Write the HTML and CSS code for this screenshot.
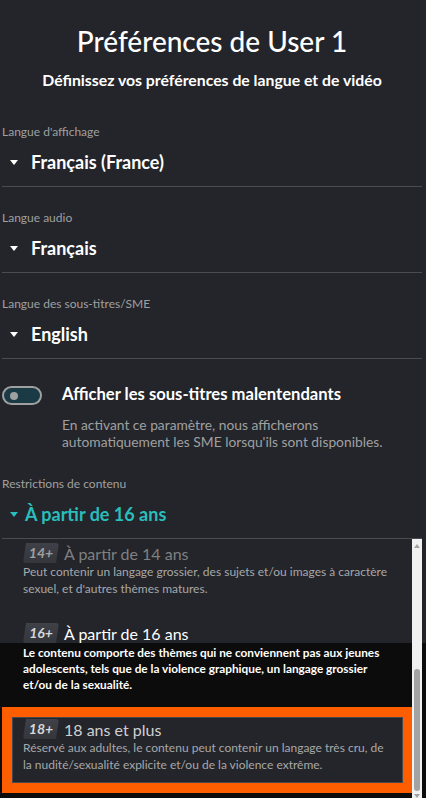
FILE: index.html
```html
<!DOCTYPE html>
<html lang="fr">
<head>
    <meta charset="UTF-8">
    <meta name="viewport" content="width=device-width, initial-scale=1.0">
    <title>Préférences de User 1</title>
    <link rel="stylesheet" href="styles.css">
</head>
<body>
    <div class="page">
        <div class="header">
            <h1>Préférences de User 1</h1>
            <p>Définissez vos préférences de langue et de vidéo</p>
        </div>

        <div class="field first">
            <div class="field-label">Langue d'affichage</div>
            <div class="select"><span class="caret"></span>Français (France)</div>
        </div>

        <div class="field">
            <div class="field-label">Langue audio</div>
            <div class="select"><span class="caret"></span>Français</div>
        </div>

        <div class="field">
            <div class="field-label">Langue des sous-titres/SME</div>
            <div class="select"><span class="caret"></span>English</div>
        </div>

        <div class="toggle-row">
            <div class="toggle"><span class="knob"></span></div>
            <div class="toggle-text">
                <div class="toggle-title">Afficher les sous-titres malentendants</div>
                <div class="toggle-desc">En activant ce paramètre, nous afficherons automatiquement les SME lorsqu'ils sont disponibles.</div>
            </div>
        </div>

        <div class="field restrictions">
            <div class="field-label">Restrictions de contenu</div>
            <div class="select open"><span class="caret"></span>À partir de 16 ans</div>
        </div>

        <div class="dropdown">
            <div class="options">
                <div class="option dim">
                    <div class="option-head">
                        <span class="badge">14+</span>
                        <span class="option-title">À partir de 14 ans</span>
                    </div>
                    <div class="option-desc">Peut contenir un langage grossier, des sujets et/ou images à caractère sexuel, et d'autres thèmes matures.</div>
                </div>
                <div class="option current">
                    <div class="option-head">
                        <span class="badge">16+</span>
                        <span class="option-title">À partir de 16 ans</span>
                    </div>
                    <div class="option-desc">Le contenu comporte des thèmes qui ne conviennent pas aux jeunes adolescents, tels que de la violence graphique, un langage grossier et/ou de la sexualité.</div>
                </div>
                <div class="option focused">
                    <div class="option-head">
                        <span class="badge">18+</span>
                        <span class="option-title">18 ans et plus</span>
                    </div>
                    <div class="option-desc">Réservé aux adultes, le contenu peut contenir un langage très cru, de la nudité/sexualité explicite et/ou de la violence extrême.</div>
                </div>
            </div>
            <div class="scrollbar">
                <span class="arrow-up"></span>
                <div class="scroll-end">
                    <div class="thumb"></div>
                    <span class="arrow-down"></span>
                </div>
            </div>
        </div>
    </div>
</body>
</html>
```

FILE: styles.css
```css
html, body {
    margin: 0;
    padding: 0;
    height: 100%;
    overflow: hidden;
}
body {
    font-family: Lato, "Noto Sans", sans-serif;
    background-color: #0c0c0d;
    color: #ffffff;
}
.page {
    height: 643px;
    background-color: #23252b;
    padding: 0 4px 0 2px;
}
.header {
    padding-top: 23px;
    text-align: center;
}
.header h1 {
    margin: 0 0 11px;
    font-size: 28px;
    line-height: 36px;
    font-weight: 500;
}
.header p {
    margin: 0;
    font-size: 15.8px;
    line-height: 20px;
    font-weight: 700;
}
.field {
    margin-top: 23px;
}
.field.first {
    margin-top: 34px;
}
.field-label {
    font-size: 12px;
    line-height: 16px;
    color: #a0a0a0;
}
.select {
    display: flex;
    align-items: center;
    margin-top: 10px;
    padding-bottom: 12px;
    border-bottom: 1px solid #4a4c52;
    font-size: 18px;
    line-height: 24px;
    font-weight: 700;
}
.caret {
    width: 0;
    height: 0;
    margin: 0 13px 0 8px;
    border-left: 4.5px solid transparent;
    border-right: 4.5px solid transparent;
    border-top: 5px solid #ffffff;
}
.select.open {
    color: #2abdbb;
}
.select.open .caret {
    border-top-color: #2abdbb;
    margin-right: 7px;
}
.toggle-row {
    display: flex;
    gap: 20px;
    margin-top: 23px;
}
.toggle {
    box-sizing: border-box;
    flex-shrink: 0;
    width: 40px;
    height: 19px;
    margin-top: 4px;
    border: 2px solid #a0a0a0;
    border-radius: 10px;
    background-color: #1a3a45;
    display: flex;
    align-items: center;
    padding-left: 6px;
}
.knob {
    width: 8px;
    height: 8px;
    border-radius: 50%;
    background-color: #a0a0a0;
}
.toggle-title {
    font-size: 16.6px;
    line-height: 24px;
    font-weight: 700;
}
.toggle-desc {
    margin-top: 10px;
    font-size: 13.8px;
    line-height: 17px;
    color: #a0a0a0;
}
.field.restrictions {
    margin-top: 26px;
}
.dropdown {
    display: flex;
    height: 259px;
}
.options {
    flex: 1;
    display: flex;
    flex-direction: column;
    gap: 14px;
    padding-top: 2px;
    overflow: hidden;
}
.option {
    margin: 0 9px 0 10px;
    padding: 1px 10px 9px;
    border: 1px solid transparent;
}
.option-head {
    display: flex;
    align-items: center;
    gap: 5px;
    height: 20px;
}
.badge {
    width: 36px;
    height: 20px;
    line-height: 20px;
    text-align: center;
    font-size: 14px;
    font-weight: 700;
    font-style: italic;
    color: #d8d8d8;
    background: linear-gradient(#3f4148, #34363c);
    border-radius: 3px;
    clip-path: polygon(3px 0, 100% 0, calc(100% - 3px) 100%, 0 100%);
}
.option-title {
    font-size: 16px;
    color: #d0d0d0;
}
.option-desc {
    margin-top: 1px;
    font-size: 12px;
    line-height: 16.5px;
    color: #a8a8a8;
}
.option.dim .badge {
    color: #a0a0a0;
}
.option.dim .option-title {
    color: #808080;
}
.option.current .option-title {
    color: #ffffff;
}
.option.current .option-desc {
    color: #ffffff;
    font-weight: 700;
    font-size: 11.8px;
    line-height: 16px;
    margin-top: 2px;
}
.option.focused {
    background-color: #23252b;
    border-color: #46484e;
    outline: 10px solid #ff5e00;
}
.scrollbar {
    width: 10px;
    background-color: #f1f1f1;
    display: flex;
    flex-direction: column;
    justify-content: space-between;
    align-items: center;
    padding-top: 5px;
}
.arrow-up, .arrow-down {
    width: 0;
    height: 0;
    border-left: 3px solid transparent;
    border-right: 3px solid transparent;
}
.arrow-up {
    border-bottom: 4px solid #a3a3a3;
}
.arrow-down {
    margin-top: 3px;
    border-top: 4px solid #a3a3a3;
}
.scroll-end {
    display: flex;
    flex-direction: column;
    align-items: center;
}
.thumb {
    width: 6px;
    height: 122px;
    border-radius: 3px;
    background-color: #a3a3a3;
}
```
